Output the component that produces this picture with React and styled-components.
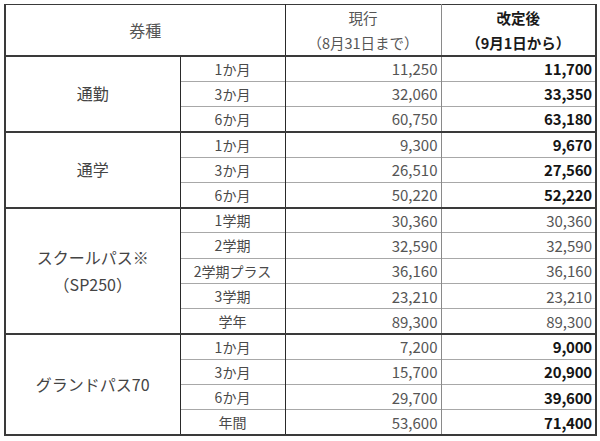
import React from 'react'
import styled, { createGlobalStyle } from 'styled-components'

const GlobalStyle = createGlobalStyle`
  body {
    margin: 0;
    background: #ffffff;
    font-family: "Noto Sans CJK JP", "Noto Sans", sans-serif;
  }
`

const Page = styled.div`
  width: 600px;
  height: 441px;
  padding: 4px 0 0 4px;
  box-sizing: border-box;
  background: #fff;
`

const Table = styled.table`
  width: 591px;
  border-collapse: collapse;
  table-layout: fixed;
  border: 2px solid #3a3a3a;
  border-top-width: 1.5px;
  color: #4a4a4a;
  font-size: 14.5px;
  line-height: 1;
`

const HeadCell = styled.th`
  height: 50px;
  font-weight: ${(p) => (p.bold ? 700 : 400)};
  font-size: ${(p) => (p.big ? '16px' : '14.5px')};
  color: ${(p) => (p.bold ? '#1a1a1a' : '#555')};
  border-bottom: 2px solid #3a3a3a;
  border-right: 1px solid ${(p) => (p.light ? '#8a8a8a' : '#2a2a2a')};
  text-align: center;
  vertical-align: middle;
  line-height: 25px;
  padding: 0;
`

const Row = styled.tr`
  height: 25.27px;
  border-top: ${(p) => (p.first ? '2px solid #3a3a3a' : '1px solid #a8a8a8')};
`

const TypeCell = styled.td`
  text-align: center;
  vertical-align: middle;
  border-right: 1px solid #2a2a2a;
  border-bottom: 2px solid #3a3a3a;
  font-size: 16px;
  line-height: 27px;
  padding: 0;
  color: #444;
`

const SubCell = styled.td`
  text-align: center;
  border-right: 1px solid #2a2a2a;
  padding: 0;
  font-size: 14px;
  color: #4a4a4a;
`

const NumCell = styled.td`
  text-align: right;
  padding: 0 3px 0 0;
  border-right: 1px solid ${(p) => (p.light ? '#8a8a8a' : '#3a3a3a')};
  font-weight: ${(p) => (p.bold ? 700 : 400)};
  color: ${(p) => (p.bold ? '#151515' : '#555')};
  font-size: 15px;
  letter-spacing: ${(p) => (p.bold ? '-0.2px' : '0')};
`

const groups = [
  {
    name: ['通勤'],
    bold: true,
    rows: [
      ['1か月', '11,250', '11,700'],
      ['3か月', '32,060', '33,350'],
      ['6か月', '60,750', '63,180'],
    ],
  },
  {
    name: ['通学'],
    bold: true,
    rows: [
      ['1か月', '9,300', '9,670'],
      ['3か月', '26,510', '27,560'],
      ['6か月', '50,220', '52,220'],
    ],
  },
  {
    name: ['スクールパス※', '（SP250）'],
    bold: false,
    rows: [
      ['1学期', '30,360', '30,360'],
      ['2学期', '32,590', '32,590'],
      ['2学期プラス', '36,160', '36,160'],
      ['3学期', '23,210', '23,210'],
      ['学年', '89,300', '89,300'],
    ],
  },
  {
    name: ['グランドパス70'],
    bold: true,
    rows: [
      ['1か月', '7,200', '9,000'],
      ['3か月', '15,700', '20,900'],
      ['6か月', '29,700', '39,600'],
      ['年間', '53,600', '71,400'],
    ],
  },
]

export default function App() {
  return (
    <Page>
      <GlobalStyle />
      <Table>
        <colgroup>
          <col style={{ width: 175 }} />
          <col style={{ width: 105 }} />
          <col style={{ width: 156 }} />
          <col style={{ width: 155 }} />
        </colgroup>
        <thead>
          <tr>
            <HeadCell colSpan={2} big>
              券種
            </HeadCell>
            <HeadCell light>
              現行
              <br />
              （8月31日まで）
            </HeadCell>
            <HeadCell bold>
              改定後
              <br />
              （9月1日から）
            </HeadCell>
          </tr>
        </thead>
        <tbody>
          {groups.map((g) =>
            g.rows.map((r, i) => (
              <Row key={g.name[0] + r[0]} first={i === 0}>
                {i === 0 && (
                  <TypeCell rowSpan={g.rows.length}>
                    {g.name.map((line) => (
                      <div key={line}>{line}</div>
                    ))}
                  </TypeCell>
                )}
                <SubCell>{r[0]}</SubCell>
                <NumCell light>{r[1]}</NumCell>
                <NumCell bold={g.bold}>{r[2]}</NumCell>
              </Row>
            ))
          )}
        </tbody>
      </Table>
    </Page>
  )
}
